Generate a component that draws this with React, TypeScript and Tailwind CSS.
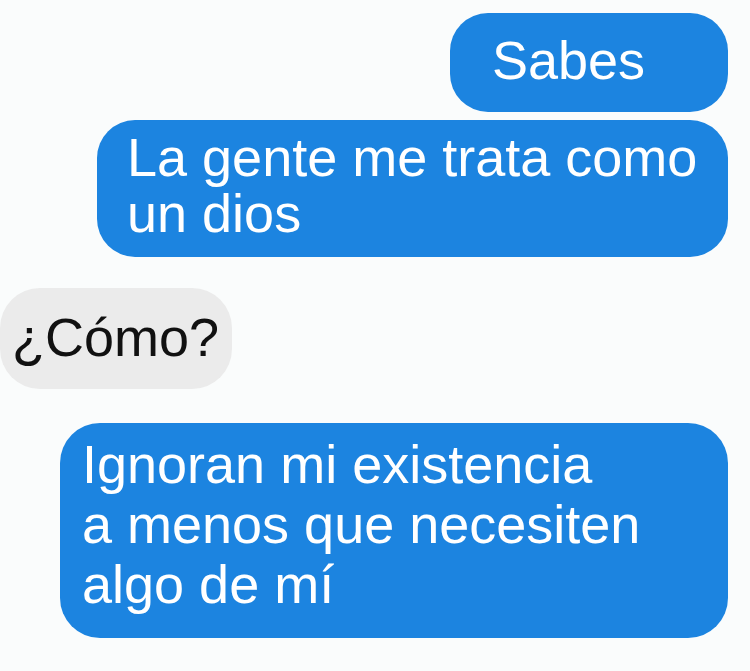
import React from "react";

export default function App() {
  const font = { fontFamily: '"Liberation Sans", Arial, Helvetica, sans-serif' };
  return (
    <div
      className="w-[750px] h-[671px] bg-[#fafcfc] overflow-hidden flex flex-col"
      style={font}
    >
      <div className="flex flex-col items-end pr-[22px] pt-[13px]">
        <div className="w-[278px] h-[99px] rounded-[38px] bg-[#1c84e0] text-white text-[54px] leading-[60px] pl-[42px] pt-[17px]">
          Sabes
        </div>
        <div className="mt-[8px] w-[631px] h-[137px] rounded-[38px] bg-[#1c84e0] text-white text-[54px] leading-[56px] pl-[30px] pr-[12px] pt-[9px]">
          La gente me trata como un dios
        </div>
      </div>
      <div className="mt-[31px] flex">
        <div className="w-[232px] h-[101px] rounded-[40px] bg-[#ebebeb] text-[#111111] text-[54px] leading-[60px] pl-[12px] pt-[19px]">
          ¿Cómo?
        </div>
      </div>
      <div className="mt-[34px] flex justify-end pr-[22px]">
        <div className="w-[668px] h-[215px] rounded-[40px] bg-[#1c84e0] text-white text-[54px] leading-[60px] pl-[22px] pr-[20px] pt-[11px]">
          Ignoran mi existencia
          <br />
          a menos que necesiten
          <br />
          algo de mí
        </div>
      </div>
    </div>
  );
}
